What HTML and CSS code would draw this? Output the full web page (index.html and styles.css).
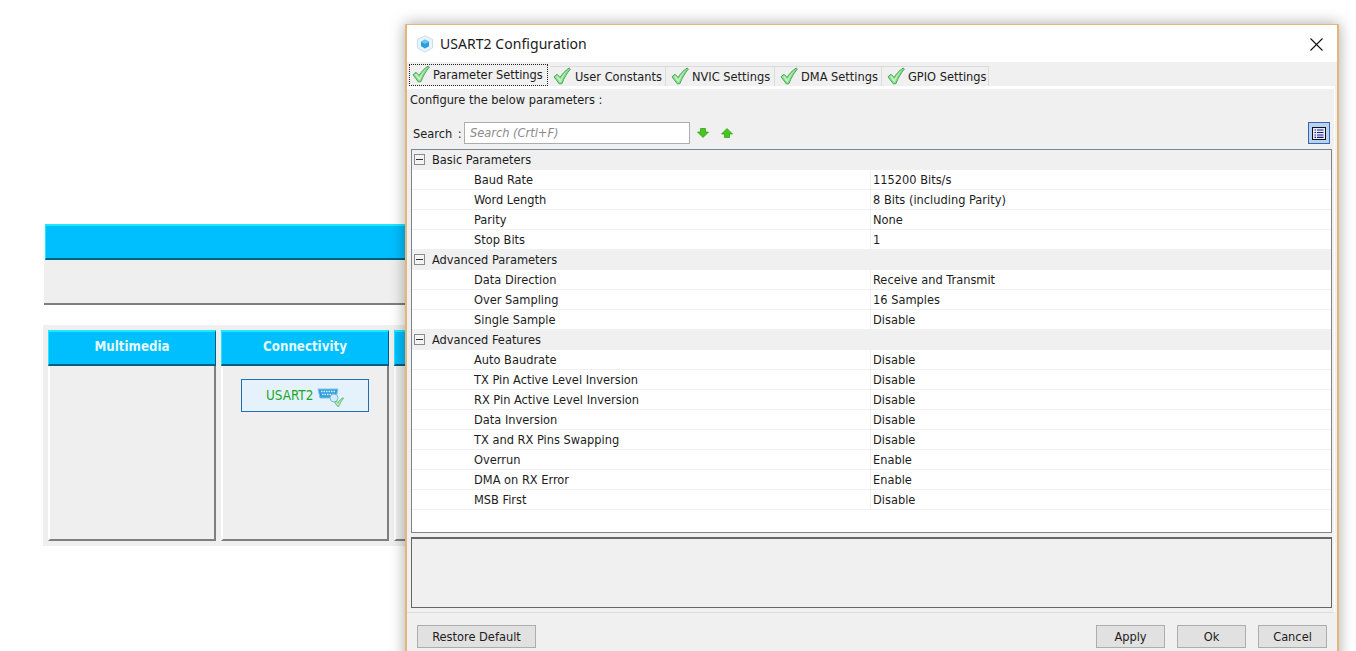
FILE: index.html
```html
<!DOCTYPE html>
<html lang="en">
<head>
<meta charset="utf-8">
<title>USART2 Configuration</title>
<link rel="stylesheet" href="styles.css">
</head>
<body>
<svg class="defs" width="0" height="0" aria-hidden="true">
  <symbol id="check" viewBox="0 0 18 18">
    <path d="M1 9.800 4 7.200 7 10.400C9.400 6.800 12.400 3.400 16.200 1L17.400 2C14 6 11 11 9 16.600L6.400 17Z" fill="#86dd88" stroke="#4fa862" stroke-width="1"/>
    <path d="M3 9.800 4.200 8.800 7.400 12.400C9.400 9 11.600 6.200 14.200 3.600 11.800 6.800 9.800 10.200 8 14.800L7 15.200Z" fill="#c4f4bf"/>
  </symbol>
</svg>

<main class="canvas">
  <section class="back-top">
    <div class="cyan-bar"></div>
    <div class="back-strip"></div>
  </section>
  <section class="categories">
    <div class="category">
      <h3 class="cat-head">Multimedia</h3>
      <div class="cat-body"></div>
    </div>
    <div class="category">
      <h3 class="cat-head">Connectivity</h3>
      <div class="cat-body">
        <div class="ip-button">
          <span>USART2</span>
          <svg class="ip-icon" width="28" height="21" viewBox="0 0 28 21">
            <path d="M1 2H21L19 11H3Z" fill="#2f9fdc" stroke="#7cc4ea" stroke-width="1"/>
            <path d="M4 4.500H18M5 7.500H17" stroke="#dff2fb" stroke-width="1.500" stroke-dasharray="1.500 1"/>
            <circle cx="17" cy="11" r="4" fill="#d5ebf7" stroke="#7cb8dc"/>
            <use href="#check" x="17" y="10" width="10" height="10"/>
          </svg>
        </div>
      </div>
    </div>
    <div class="category category-cut">
      <h3 class="cat-head"></h3>
      <div class="cat-body"></div>
    </div>
  </section>
</main>

<div class="dialog">
  <header class="titlebar">
    <svg class="app-icon" width="18" height="18" viewBox="0 0 18 18">
      <path d="M9 .8 16.500 4.500V13L9 17.200 1.500 13V4.500Z" fill="#eaf5fb" stroke="#c4e0f0"/>
      <path d="M9 4.500 13 6.700V11.300L9 13.500 5 11.300V6.700Z" fill="#2a9fe0"/>
      <path d="M9 4.500 13 6.700 9 9 5 6.700Z" fill="#6cc4f0"/>
    </svg>
    <span class="title">USART2 Configuration</span>
    <svg class="close" width="13" height="13" viewBox="0 0 13 13">
      <path d="M.5.5 12.500 12.500M12.500.5.500 12.500" stroke="#111" stroke-width="1.100" fill="none"/>
    </svg>
  </header>

  <nav class="tabs">
    <div class="tab tab-active"><svg class="tick"><use href="#check"/></svg>Parameter Settings</div>
    <div class="tab tab-user"><svg class="tick"><use href="#check"/></svg>User Constants</div>
    <div class="tab tab-nvic"><svg class="tick"><use href="#check"/></svg>NVIC Settings</div>
    <div class="tab tab-dma"><svg class="tick"><use href="#check"/></svg>DMA Settings</div>
    <div class="tab tab-gpio"><svg class="tick"><use href="#check"/></svg>GPIO Settings</div>
  </nav>

  <div class="panel">
    <p class="configure">Configure the below parameters :</p>
    <div class="search-row">
      <label class="search-label">Search :</label>
      <div class="search-input">Search (Crtl+F)</div>
      <svg class="arrow arrow-down" width="12" height="12" viewBox="0 0 12 12"><path d="M3.500 1.500H8.500V5H11.500L6 10.500 .5 5H3.500Z" fill="#45c81c" stroke="#2c9a10" stroke-width=".7"/></svg>
      <svg class="arrow arrow-up" width="12" height="12" viewBox="0 0 12 12"><path d="M3.500 10.500H8.500V7H11.500L6 1.500 .5 7H3.500Z" fill="#45c81c" stroke="#2c9a10" stroke-width=".7"/></svg>
      <div class="view-toggle">
        <svg width="14" height="13" viewBox="0 0 14 13">
          <rect x=".5" y=".5" width="13" height="12" fill="#e8ecf8" stroke="#111"/>
          <path d="M2.500 3H4M5 3H11.500M2.500 5.500H4M5 5.500H11.500M2.500 8H4M5 8H11.500M2.500 10.300H4M5 10.300H11.500" stroke="#1a1a90" stroke-width="1.200"/>
        </svg>
      </div>
    </div>

    <div class="table">
      <div class="group"><span class="minus"></span>Basic Parameters</div>
      <div class="row"><span class="name">Baud Rate</span><span class="value">115200 Bits/s</span></div>
      <div class="row"><span class="name">Word Length</span><span class="value">8 Bits (including Parity)</span></div>
      <div class="row"><span class="name">Parity</span><span class="value">None</span></div>
      <div class="row"><span class="name">Stop Bits</span><span class="value">1</span></div>
      <div class="group"><span class="minus"></span>Advanced Parameters</div>
      <div class="row"><span class="name">Data Direction</span><span class="value">Receive and Transmit</span></div>
      <div class="row"><span class="name">Over Sampling</span><span class="value">16 Samples</span></div>
      <div class="row"><span class="name">Single Sample</span><span class="value">Disable</span></div>
      <div class="group"><span class="minus"></span>Advanced Features</div>
      <div class="row"><span class="name">Auto Baudrate</span><span class="value">Disable</span></div>
      <div class="row"><span class="name">TX Pin Active Level Inversion</span><span class="value">Disable</span></div>
      <div class="row"><span class="name">RX Pin Active Level Inversion</span><span class="value">Disable</span></div>
      <div class="row"><span class="name">Data Inversion</span><span class="value">Disable</span></div>
      <div class="row"><span class="name">TX and RX Pins Swapping</span><span class="value">Disable</span></div>
      <div class="row"><span class="name">Overrun</span><span class="value">Enable</span></div>
      <div class="row"><span class="name">DMA on RX Error</span><span class="value">Enable</span></div>
      <div class="row"><span class="name">MSB First</span><span class="value">Disable</span></div>
    </div>

    <div class="description"></div>
  </div>

  <footer class="footer">
    <button class="btn btn-restore">Restore Default</button>
    <div class="spacer"></div>
    <button class="btn">Apply</button>
    <button class="btn">Ok</button>
    <button class="btn">Cancel</button>
  </footer>
</div>
</body>
</html>
```
FILE: styles.css
```css
* { box-sizing: border-box; }

html, body {
  margin: 0;
  height: 651px;
  overflow: hidden;
  background: #fff;
}

body {
  position: relative;
  font-family: "DejaVu Sans Condensed", "DejaVu Sans", sans-serif;
  font-stretch: condensed;
  font-size: 12.7px;
  color: #1c1c1c;
}

.defs { position: absolute; }

.canvas {
  width: 405px;
  padding: 224px 0 0 43px;
  overflow: hidden;
}

.back-top { width: 362px; }

.cyan-bar {
  height: 36px;
  margin-left: 2px;
  background: #00bfff;
  border-top: 2px solid #1ce8ff;
  border-left: 1px solid #1ce8ff;
  border-bottom: 2px solid #00607f;
}

.back-strip {
  height: 45px;
  margin-left: 1px;
  background: #efefef;
  border-bottom: 2px solid #7f7f7f;
}

.categories {
  display: flex;
  gap: 5px;
  width: 372px;
  height: 221px;
  margin-top: 20px;
  padding: 5px;
  background: #efefef;
}

.category {
  flex: 0 0 168px;
  display: flex;
  flex-direction: column;
  height: 211px;
}

.cat-head {
  flex: 0 0 36px;
  margin: 0;
  padding-top: 7px;
  background: #00bfff;
  border-top: 2px solid #1ce8ff;
  border-left: 1px solid #1ce8ff;
  border-bottom: 2px solid #00607f;
  border-right: 1px solid #00607f;
  color: #e4f7ff;
  font: bold 13.2px "DejaVu Sans Condensed", "DejaVu Sans", sans-serif;
  text-align: center;
}

.cat-body {
  flex: 1;
  padding-top: 13px;
  background: #efefef;
  border-left: 2px solid #fff;
  border-right: 2px solid #7f7f7f;
  border-bottom: 2px solid #7f7f7f;
}

.ip-button {
  display: flex;
  align-items: center;
  width: 128px;
  height: 33px;
  margin-left: 18px;
  padding: 0 0 0 24px;
  background: #e6f2fb;
  border: 1px solid #1f6fb5;
  color: #22a62a;
  font-size: 13.4px;
}

.ip-icon { margin: 3px 0 0 4px; }

.dialog {
  position: absolute;
  left: 405px;
  top: 24px;
  width: 934px;
  height: 640px;
  background: #f0f0f0;
  border: 1px solid #e3b777;
  border-width: 1px 2px 2px 2px;
  box-shadow: 0 0 14px rgba(0, 0, 0, .35);
}

.titlebar {
  display: flex;
  align-items: center;
  height: 37px;
  padding: 0 14px 0 9px;
  background: #fff;
}

.app-icon { flex: none; }

.title {
  margin-left: 6px;
  font: 14px "Noto Sans", sans-serif;
  letter-spacing: .05px;
  color: #1a1a1a;
}

.close { margin-left: auto; margin-top: 2px; }

.tabs {
  display: flex;
  align-items: flex-end;
  height: 24px;
  padding-left: 2px;
}

.tab {
  display: flex;
  align-items: center;
  height: 20px;
  padding: 0 0 0 3px;
  white-space: nowrap;
  border: 1px solid #dcdcdc;
  border-bottom: 0;
  border-left: 0;
}

.tick {
  flex: none;
  width: 18px;
  height: 18px;
  margin-right: 3px;
  margin-top: -1px;
}

.tab-active {
  width: 139px;
  height: 22px;
  margin-right: 2px;
  padding: 0 0 1px 2px;
  border: 1px dotted #222;
}

.tab-user { width: 116px; }
.tab-user .tick { margin-right: 4px; }
.tab-nvic { width: 109px; padding-left: 5px; }
.tab-dma { width: 107px; padding-left: 5px; }
.tab-gpio { width: 107px; padding-left: 5px; }

.panel {
  width: 928px;
  height: 527px;
  padding: 0 3px;
  border-top: 3px solid #fff;
  border-right: 1px solid #fff;
  border-bottom: 1px solid #dedede;
}

.configure {
  margin: 0;
  height: 22px;
  padding: 3px 0 0 0;
}

.search-row {
  display: flex;
  align-items: center;
  height: 22px;
  margin-top: 11px;
  padding-left: 3px;
}

.search-label { width: 51px; word-spacing: 2px; }

.search-input {
  width: 226px;
  height: 22px;
  padding: 2px 5px;
  background: #fff;
  border: 1px solid #adadad;
  color: #8a8a8a;
  font-style: italic;
}

.arrow { margin-left: 7px; }
.arrow-down { margin-left: 7px; }
.arrow-up { margin-left: 12px; }

.view-toggle {
  display: flex;
  align-items: center;
  justify-content: center;
  width: 22px;
  height: 22px;
  margin-left: auto;
  margin-right: 1px;
  background: #b9d1f2;
  border: 1px solid #3a66b0;
}

.table {
  width: 921px;
  height: 384px;
  margin: 5px 0 0 1px;
  background: #fff;
  border: 1px solid #7f8589;
}

.group {
  display: flex;
  align-items: center;
  height: 20px;
  background: #f0f0f0;
  padding: 0 0 2px 2px;
}

.minus {
  position: relative;
  width: 11px;
  height: 11px;
  margin-right: 7px;
  background: #f4f4f4;
  border: 1px solid #8a8a8a;
}

.minus::after {
  content: "";
  position: absolute;
  left: 1px;
  right: 1px;
  top: 4px;
  height: 1px;
  background: #333;
}

.row {
  display: grid;
  grid-template-columns: 458px 1fr;
  height: 20px;
  line-height: 20px;
  background: #fff;
  border-bottom: 1px solid #f0f0f0;
}

.name { padding-left: 62px; }

.value {
  padding-left: 2px;
  border-left: 1px solid #f0f0f0;
}

.description {
  width: 921px;
  height: 71px;
  margin: 4px 0 0 1px;
  background: #f0f0f0;
  border: 1px solid #666;
  border-top-width: 2px;
}

.footer {
  display: flex;
  gap: 12px;
  padding: 12px 10px 0 10px;
}

.spacer { flex: 1; }

.btn {
  width: 69px;
  height: 23px;
  padding: 0 0 1px;
  background: #e1e1e1;
  border: 1px solid #adadad;
  font: inherit;
  color: #1c1c1c;
}

.btn-restore { width: 119px; }
```
